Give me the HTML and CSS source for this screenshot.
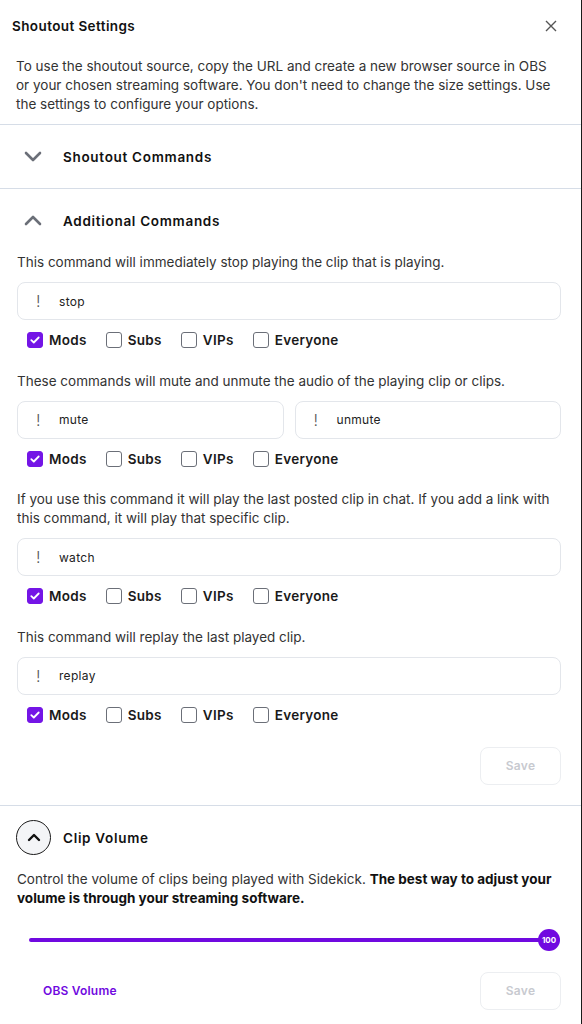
FILE: index.html
```html
<!DOCTYPE html>
<html>
<head>
<meta charset="utf-8">
<link rel="stylesheet" href="styles.css">
</head>
<body>
<div class="dialog">
  <header class="top">
    <h1 class="title">Shoutout Settings</h1>
    <button class="close" aria-label="Close">
      <svg width="12" height="12" viewBox="0 0 12 12"><path d="M1 1L11 11M11 1L1 11" stroke="#555" stroke-width="1.4" fill="none"/></svg>
    </button>
  </header>
  <p class="intro">To use the shoutout source, copy the URL and create a new browser source in OBS or your chosen streaming software. You don't need to change the size settings. Use the settings to configure your options.</p>

  <section class="section">
    <div class="sec-head">
      <svg class="chev" width="18" height="11" viewBox="0 0 18 11"><path d="M2 2L9 9L16 2" stroke="#6b6f78" stroke-width="2.6" fill="none" stroke-linecap="round" stroke-linejoin="round"/></svg>
      <h2 class="sec-title">Shoutout Commands</h2>
    </div>
  </section>

  <section class="section">
    <div class="sec-head">
      <svg class="chev" width="18" height="11" viewBox="0 0 18 11"><path d="M2 9L9 2L16 9" stroke="#6b6f78" stroke-width="2.6" fill="none" stroke-linecap="round" stroke-linejoin="round"/></svg>
      <h2 class="sec-title">Additional Commands</h2>
    </div>
    <div class="sec-body first">
      <div class="group">
        <p class="desc">This command will immediately stop playing the clip that is playing.</p>
        <div class="inputs">
          <div class="field"><span class="bang">!</span><span class="val">stop</span></div>
        </div>
        <div class="perms">
          <label class="perm"><span class="box on"><svg width="10" height="8" viewBox="0 0 10 8"><path d="M1.3 4.2L3.8 6.5L8.7 1.5" stroke="#fff" stroke-width="1.8" fill="none" stroke-linecap="round" stroke-linejoin="round"/></svg></span>Mods</label>
          <label class="perm"><span class="box"></span>Subs</label>
          <label class="perm"><span class="box"></span>VIPs</label>
          <label class="perm"><span class="box"></span>Everyone</label>
        </div>
      </div>
      <div class="group">
        <p class="desc">These commands will mute and unmute the audio of the playing clip or clips.</p>
        <div class="inputs">
          <div class="field"><span class="bang">!</span><span class="val">mute</span></div>
          <div class="field"><span class="bang">!</span><span class="val">unmute</span></div>
        </div>
        <div class="perms">
          <label class="perm"><span class="box on"><svg width="10" height="8" viewBox="0 0 10 8"><path d="M1.3 4.2L3.8 6.5L8.7 1.5" stroke="#fff" stroke-width="1.8" fill="none" stroke-linecap="round" stroke-linejoin="round"/></svg></span>Mods</label>
          <label class="perm"><span class="box"></span>Subs</label>
          <label class="perm"><span class="box"></span>VIPs</label>
          <label class="perm"><span class="box"></span>Everyone</label>
        </div>
      </div>
      <div class="group">
        <p class="desc">If you use this command it will play the last posted clip in chat. If you add a link with this command, it will play that specific clip.</p>
        <div class="inputs">
          <div class="field"><span class="bang">!</span><span class="val">watch</span></div>
        </div>
        <div class="perms">
          <label class="perm"><span class="box on"><svg width="10" height="8" viewBox="0 0 10 8"><path d="M1.3 4.2L3.8 6.5L8.7 1.5" stroke="#fff" stroke-width="1.8" fill="none" stroke-linecap="round" stroke-linejoin="round"/></svg></span>Mods</label>
          <label class="perm"><span class="box"></span>Subs</label>
          <label class="perm"><span class="box"></span>VIPs</label>
          <label class="perm"><span class="box"></span>Everyone</label>
        </div>
      </div>
      <div class="group">
        <p class="desc">This command will replay the last played clip.</p>
        <div class="inputs">
          <div class="field"><span class="bang">!</span><span class="val">replay</span></div>
        </div>
        <div class="perms">
          <label class="perm"><span class="box on"><svg width="10" height="8" viewBox="0 0 10 8"><path d="M1.3 4.2L3.8 6.5L8.7 1.5" stroke="#fff" stroke-width="1.8" fill="none" stroke-linecap="round" stroke-linejoin="round"/></svg></span>Mods</label>
          <label class="perm"><span class="box"></span>Subs</label>
          <label class="perm"><span class="box"></span>VIPs</label>
          <label class="perm"><span class="box"></span>Everyone</label>
        </div>
      </div>
      <div class="actions">
        <button class="save">Save</button>
      </div>
    </div>
  </section>

  <section class="section last">
    <div class="sec-head">
      <span class="circle">
        <svg width="14" height="9" viewBox="0 0 14 9"><path d="M2 7L7 2L12 7" stroke="#111" stroke-width="2.4" fill="none" stroke-linecap="round" stroke-linejoin="round"/></svg>
      </span>
      <h2 class="sec-title">Clip Volume</h2>
    </div>
    <div class="sec-body">
      <p class="desc">Control the volume of clips being played with Sidekick. <strong>The best way to adjust your volume is through your streaming software.</strong></p>
      <div class="slider">
        <div class="track"></div>
        <div class="thumb">100</div>
      </div>
      <div class="vol-row">
        <span class="obs">OBS Volume</span>
        <button class="save">Save</button>
      </div>
    </div>
  </section>
</div>
</body>
</html>
```
FILE: styles.css
```css
* { box-sizing: border-box; }
html, body { margin: 0; padding: 0; background: #fff; }
body {
  font-family: Inter, "Liberation Sans", sans-serif;
  color: #2b2b2b;
  width: 582px;
}
.dialog {
  width: 582px;
  min-height: 1024px;
  border-right: 1px solid #1a1a1a;
}
.top {
  height: 52px;
  display: flex;
  align-items: center;
  justify-content: space-between;
  padding: 0 24px 0 12px;
}
.title {
  margin: 0;
  font-size: 13.5px;
  font-weight: 600;
  color: #111;
  letter-spacing: 0.4px;
}
.close {
  border: 0;
  background: none;
  padding: 0;
  display: flex;
}
.intro {
  margin: 5px 0 0;
  padding: 0 22px 10px 16px;
  font-size: 13.5px;
  line-height: 19px;
  color: #333;
  border-bottom: 1px solid #d6dde7;
}
.section { border-bottom: 1px solid #d6dde7; }
.section.last { border-bottom: 0; }
.sec-head {
  height: 63px;
  display: flex;
  align-items: center;
  padding-left: 24px;
  gap: 21px;
}
.section.last .sec-head { padding-left: 16px; gap: 12px; height: 64px; }
.sec-title {
  margin: 0;
  font-size: 13.5px;
  font-weight: 600;
  color: #111;
  letter-spacing: 0.7px;
}
.chev { display: block; }
.sec-body { padding: 0 20px 20px 17px; }
.sec-body.first { padding-top: 1px; }
.group { margin-bottom: 21.67px; }
.desc {
  margin: 0;
  font-size: 13.5px;
  line-height: 19px;
  color: #333;
}
.desc strong { color: #111; font-weight: 700; }
.inputs { margin-top: 10px; display: flex; gap: 11px; }
.field {
  flex: 1;
  height: 38px;
  border: 1px solid #e3e6eb;
  border-radius: 8px;
  display: flex;
  align-items: center;
  padding-left: 18px;
}
.bang { font-size: 16px; color: #555; font-weight: 300; width: 23px; }
.val { font-size: 12px; color: #222; letter-spacing: 0.3px; }
.perms {
  margin-top: 10px;
  height: 20px;
  display: flex;
  align-items: center;
  padding-left: 10px;
  gap: 19px;
}
.perm {
  display: flex;
  align-items: center;
  gap: 6px;
  font-size: 13.5px;
  font-weight: 600;
  color: #1a1a1a;
  letter-spacing: 0.3px;
}
.box {
  width: 16px;
  height: 16px;
  border: 1.5px solid #6b6f78;
  border-radius: 3px;
  display: flex;
  align-items: center;
  justify-content: center;
}
.box.on { background: #7415e6; border-color: #7415e6; }
.actions { display: flex; justify-content: flex-end; margin-top: 22px; }
.save {
  width: 81px;
  height: 38px;
  border: 1px solid #eceef1;
  border-radius: 8px;
  background: #fff;
  color: #c8cad0;
  font-family: inherit;
  font-size: 12px;
  font-weight: 600;
  letter-spacing: 0.3px;
}
.circle {
  width: 35px;
  height: 35px;
  border: 1.5px solid #1a1a1a;
  border-radius: 50%;
  background: #f4f5f7;
  display: flex;
  align-items: center;
  justify-content: center;
}
.slider {
  position: relative;
  margin: 21px 0 0 12px;
  width: 531px;
  height: 22px;
  display: flex;
  align-items: center;
}
.track {
  width: 520px;
  height: 4px;
  background: #7009e0;
  border-radius: 2px;
}
.thumb {
  position: absolute;
  right: 0;
  top: 0;
  width: 22px;
  height: 22px;
  border-radius: 50%;
  background: #7009e0;
  color: #fff;
  font-size: 8px;
  font-weight: 700;
  display: flex;
  align-items: center;
  justify-content: center;
}
.vol-row {
  margin-top: 21px;
  display: flex;
  align-items: center;
  justify-content: space-between;
  padding-left: 26px;
}
.obs {
  font-size: 12px;
  font-weight: 600;
  color: #7009e0;
  letter-spacing: 0.2px;
}
```
